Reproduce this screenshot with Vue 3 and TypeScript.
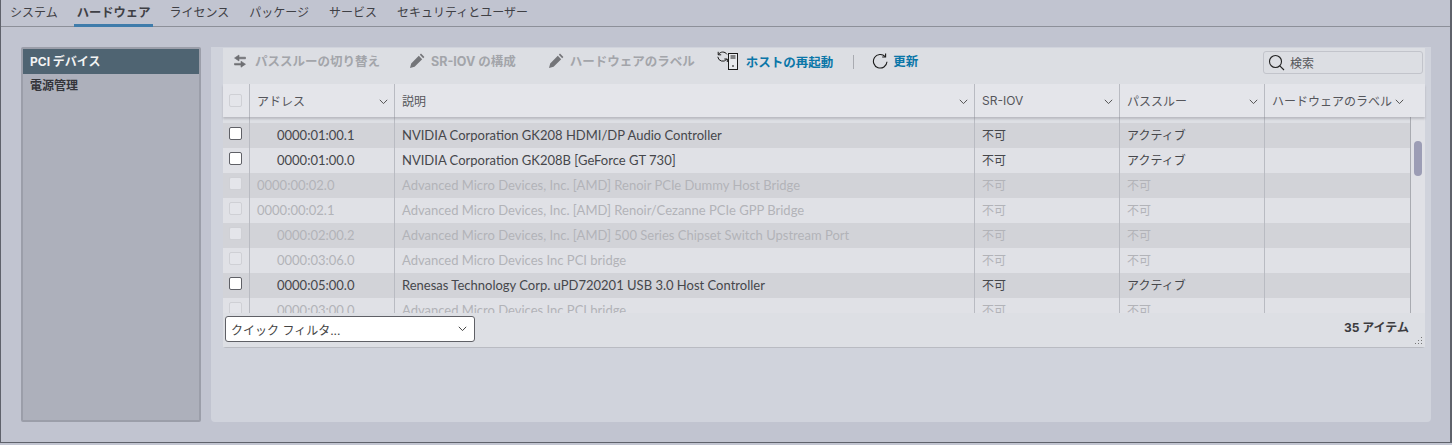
<script setup lang="ts">
interface Row {
  address: string
  desc: string
  sriov: string
  pass: string
  enabled: boolean
  indent: boolean
}

const tabs: string[] = ['システム', 'ハードウェア', 'ライセンス', 'パッケージ', 'サービス', 'セキュリティとユーザー']

const rows: Row[] = [
  { address: '0000:01:00.1', desc: 'NVIDIA Corporation GK208 HDMI/DP Audio Controller', sriov: '不可', pass: 'アクティブ', enabled: true, indent: true },
  { address: '0000:01:00.0', desc: 'NVIDIA Corporation GK208B [GeForce GT 730]', sriov: '不可', pass: 'アクティブ', enabled: true, indent: true },
  { address: '0000:00:02.0', desc: 'Advanced Micro Devices, Inc. [AMD] Renoir PCIe Dummy Host Bridge', sriov: '不可', pass: '不可', enabled: false, indent: false },
  { address: '0000:00:02.1', desc: 'Advanced Micro Devices, Inc. [AMD] Renoir/Cezanne PCIe GPP Bridge', sriov: '不可', pass: '不可', enabled: false, indent: false },
  { address: '0000:02:00.2', desc: 'Advanced Micro Devices, Inc. [AMD] 500 Series Chipset Switch Upstream Port', sriov: '不可', pass: '不可', enabled: false, indent: true },
  { address: '0000:03:06.0', desc: 'Advanced Micro Devices Inc PCI bridge', sriov: '不可', pass: '不可', enabled: false, indent: true },
  { address: '0000:05:00.0', desc: 'Renesas Technology Corp. uPD720201 USB 3.0 Host Controller', sriov: '不可', pass: 'アクティブ', enabled: true, indent: true },
  { address: '0000:03:00.0', desc: 'Advanced Micro Devices Inc PCI bridge', sriov: '不可', pass: '不可', enabled: false, indent: true },
]

const headers: string[] = ['アドレス', '説明', 'SR-IOV', 'パススルー', 'ハードウェアのラベル']
</script>

<template>
  <div class="page">
    <nav class="tabs">
      <span v-for="(tab, i) in tabs" :key="tab" class="tab" :class="{ active: i === 1 }">{{ tab }}</span>
    </nav>

    <div class="content">
      <aside class="sidebar">
        <div class="side-item selected">PCI デバイス</div>
        <div class="side-item">電源管理</div>
      </aside>

      <main class="panel">
        <div class="grid-box">
          <div class="toolbar">
            <button class="action disabled first">
              <svg width="14" height="14" viewBox="0 0 14 14" fill="#6e6f73" stroke="#6e6f73" stroke-width="0.6">
                <path d="M1.5 4 6 1v2.2h6.5v1.6H6V7zM12.5 10.2 8 13.2V11H1.5V9.4H8V7.2z" />
              </svg>
              パススルーの切り替え
            </button>
            <button class="action disabled pencil">
              <svg width="16" height="16" viewBox="0 0 16 16" fill="#747579">
                <path d="M1 15l1.2-4.6 7.6-7.6 3.4 3.4-7.6 7.6zM10.8 1.8l1.2-1.2 3.4 3.4-1.2 1.2z" />
              </svg>
              SR-IOV の構成
            </button>
            <button class="action disabled pencil">
              <svg width="16" height="16" viewBox="0 0 16 16" fill="#747579">
                <path d="M1 15l1.2-4.6 7.6-7.6 3.4 3.4-7.6 7.6zM10.8 1.8l1.2-1.2 3.4 3.4-1.2 1.2z" />
              </svg>
              ハードウェアのラベル
            </button>
            <button class="action live reboot">
              <svg width="22" height="20" viewBox="0 0 22 20" fill="none" stroke="#1a1a1a" stroke-width="1">
                <path d="M10 3.4A5 5 0 0 0 1.4 3.6" />
                <path d="M0.8 5.8A5 5 0 0 0 9.6 8.4" />
                <path d="M1.2 0.8v3h3M10.3 11V8h-3" />
                <rect x="11.5" y="2.5" width="9" height="16" fill="#e8eaee" />
                <path d="M13.5 5h5M13.5 7h5" />
                <circle cx="16" cy="15" r="1" fill="#555" stroke="none" />
              </svg>
              ホストの再起動
            </button>
            <span class="divider"></span>
            <button class="action live refresh">
              <svg width="16" height="16" viewBox="0 0 16 16" fill="none" stroke="#1a1a1a" stroke-width="1.1">
                <path d="M13.2 3.6A6.8 6.8 0 1 0 15 8.8" />
                <path d="M13.6 0.6v3.4h-3.4" />
              </svg>
              更新
            </button>
            <div class="search">
              <svg width="17" height="17" viewBox="0 0 17 17" fill="none" stroke="#222" stroke-width="1.1">
                <circle cx="7.5" cy="7.5" r="6" />
                <path d="M11.8 11.8l4.2 4.2" />
              </svg>
              <span>検索</span>
            </div>
          </div>

          <div class="head">
            <div class="cell check-cell"><span class="check off"></span></div>
            <div v-for="h in headers" :key="h" class="cell head-cell">
              <span>{{ h }}</span>
              <svg class="chev" width="9" height="6" viewBox="0 0 9 6" fill="none" stroke="#555" stroke-width="1">
                <path d="M0.8 0.8 4.5 4.6 8.2 0.8" />
              </svg>
            </div>
          </div>

          <div class="body">
            <div class="rows">
              <div class="gap-row">
                <div></div><div></div><div></div><div></div><div></div><div></div>
              </div>
              <div v-for="r in rows" :key="r.address + r.desc" class="row" :class="{ dim: !r.enabled }">
                <div class="cell check-cell"><span class="check" :class="{ off: !r.enabled }"></span></div>
                <div class="cell latin" :class="{ indent: r.indent }">{{ r.address }}</div>
                <div class="cell latin">{{ r.desc }}</div>
                <div class="cell lift">{{ r.sriov }}</div>
                <div class="cell lift">{{ r.pass }}</div>
                <div class="cell"></div>
              </div>
            </div>
            <div class="scrollbar"><div class="thumb"></div></div>
          </div>

          <div class="foot">
            <div class="filter">
              <span>クイック フィルタ...</span>
              <svg width="9" height="6" viewBox="0 0 9 6" fill="none" stroke="#444" stroke-width="1">
                <path d="M0.8 0.8 4.5 4.6 8.2 0.8" />
              </svg>
            </div>
            <span class="count">35 アイテム</span>
            <svg class="grip" width="8" height="8" viewBox="0 0 8 8" fill="#777">
              <rect x="6" y="0" width="1" height="1" /><rect x="6" y="3" width="1" height="1" />
              <rect x="3" y="3" width="1" height="1" /><rect x="6" y="6" width="1" height="1" />
              <rect x="3" y="6" width="1" height="1" /><rect x="0" y="6" width="1" height="1" />
            </svg>
          </div>
        </div>
      </main>
    </div>
  </div>
</template>

<style>
html, body {
  margin: 0;
  background: #c1c4d0;
}
</style>

<style scoped>
.page {
  box-sizing: border-box;
  width: 1452px;
  height: 443px;
  overflow: hidden;
  background: #c1c4d0;
  border-left: 1px solid #5f626b;
  border-right: 2px solid #5f626b;
  border-bottom: 1px solid #5f626b;
  font-family: Inter, "Noto Sans CJK JP", sans-serif;
  font-size: 12px;
  color: #3c3c3f;
}
.tabs {
  display: flex;
  height: 27px;
  padding-left: 5px;
  gap: 12px;
  box-sizing: border-box;
  border-bottom: 1px solid #8d9099;
}
.tab {
  height: 27px;
  padding: 0 4px;
  line-height: 25px;
  box-sizing: border-box;
  color: #3f4045;
}
.active {
  padding: 0 3px;
  font-size: 12.3px;
  font-weight: 700;
  border-bottom: 3px solid #3f7cab;
}
.content {
  display: flex;
  gap: 10px;
  padding: 20px 0 0 20px;
}
.sidebar {
  box-sizing: border-box;
  width: 180px;
  height: 375px;
  background: #adb0bb;
  border: 2px solid #9b9ea9;
  border-radius: 2px;
}
.side-item {
  height: 24px;
  line-height: 24px;
  padding-left: 7px;
  font-weight: 700;
  color: #34353a;
}
.selected {
  height: 25px;
  line-height: 26px;
  background: #4f6472;
  color: #f2f3f3;
}
.panel {
  box-sizing: border-box;
  width: 1220px;
  height: 375px;
  background: #d0d3dc;
  border-radius: 0 0 4px 4px;
  padding: 1px 6px 0 12px;
}
.grid-box {
  height: 299px;
  display: flex;
  flex-direction: column;
  border-radius: 3px;
  border-bottom: 1px solid #b9bbc2;
  background: #dddfe4;
}
.toolbar {
  box-sizing: border-box;
  display: flex;
  align-items: center;
  height: 36px;
  padding-bottom: 8px;
  flex: none;
  background: #dcdee3;
}
.action {
  display: flex;
  align-items: center;
  gap: 8px;
  border: 0;
  padding: 0;
  margin: -3px 29px 0 0;
  background: none;
  font: inherit;
  font-weight: 700;
  font-size: 12.5px;
  white-space: nowrap;
}
.first {
  margin-left: 10px;
}
.pencil {
  margin-right: 32px;
  gap: 6px;
}
.disabled {
  color: #a3a5aa;
}
.live {
  color: #0a76a8;
}
.reboot {
  margin: -2px 0 0 -10px;
  gap: 7px;
}
.refresh {
  gap: 5px;
}
.divider {
  width: 1px;
  height: 14px;
  background: #a9abb1;
  margin: 0 18px 0 20px;
}
.search {
  margin-left: auto;
  margin-right: 2px;
  box-sizing: border-box;
  width: 160px;
  height: 23px;
  border: 1px solid #c2c4cb;
  border-radius: 3px;
  display: flex;
  align-items: center;
  gap: 5px;
  padding-left: 4px;
  color: #55565a;
}
.head, .row, .gap-row {
  display: grid;
  grid-template-columns: 27px 145px 580px 145px 145px 145px;
}
.head {
  height: 33px;
  flex: none;
  background: #e4e5ea;
  box-shadow: 0 2px 2px rgba(120, 120, 130, 0.35);
  position: relative;
}
.cell {
  box-sizing: border-box;
  display: flex;
  align-items: center;
  padding-left: 7px;
  border-right: 1px solid #b9bbc2;
  white-space: nowrap;
  overflow: hidden;
  min-width: 0;
}
.cell:last-child {
  border-right: 0;
}
.latin {
  font-family: Lato, "Noto Sans CJK JP", sans-serif;
  font-size: 13px;
  padding-bottom: 1px;
}
.lift {
  padding-bottom: 2px;
}
.head-cell {
  justify-content: space-between;
  padding-right: 6px;
  color: #55565b;
}
.chev {
  flex: none;
  margin-top: 2px;
}
.check-cell {
  padding-left: 6px;
}
.check {
  box-sizing: border-box;
  width: 13px;
  height: 13px;
  background: #fff;
  border: 1px solid #5f6066;
  border-radius: 2px;
  margin-top: -4px;
}
.check.off {
  background: #e4e5ea;
  border-color: #cfd0d5;
}
.head .check-cell .check {
  margin-top: 0;
}
.body {
  flex: 1;
  min-height: 0;
  display: flex;
  overflow: hidden;
}
.rows {
  width: 1187px;
  overflow: hidden;
}
.gap-row {
  height: 6px;
}
.gap-row div {
  border-right: 1px solid #b9bbc2;
}
.gap-row div:last-child {
  border-right: 0;
}
.row {
  height: 25px;
  color: #46474b;
  background: #e0e1e6;
}
.row:nth-child(even) {
  background: #d2d3d8;
}
.row.dim {
  color: #b2b3b8;
}
.indent {
  padding-left: 27px;
}
.scrollbar {
  box-sizing: border-box;
  width: 15px;
  border-left: 1px solid #a9abb1;
  background: #e0e1e6;
  padding-top: 24px;
}
.thumb {
  width: 8px;
  height: 35px;
  margin-left: 3px;
  background: #9c9db5;
  border-radius: 4px;
}
.foot {
  box-sizing: border-box;
  height: 34px;
  flex: none;
  display: flex;
  align-items: flex-start;
  justify-content: space-between;
  padding: 3px 16px 0 2px;
  position: relative;
  background: #dddfe4;
}
.filter {
  box-sizing: border-box;
  width: 250px;
  height: 26px;
  background: #fff;
  border: 1px solid #5f6066;
  border-radius: 3px;
  display: flex;
  align-items: center;
  justify-content: space-between;
  padding: 0 7px 0 5px;
  color: #444;
}
.count {
  font-weight: 700;
  color: #3c3c3f;
  margin-top: 2px;
}
.grip {
  position: absolute;
  right: 2px;
  bottom: 2px;
}
</style>
